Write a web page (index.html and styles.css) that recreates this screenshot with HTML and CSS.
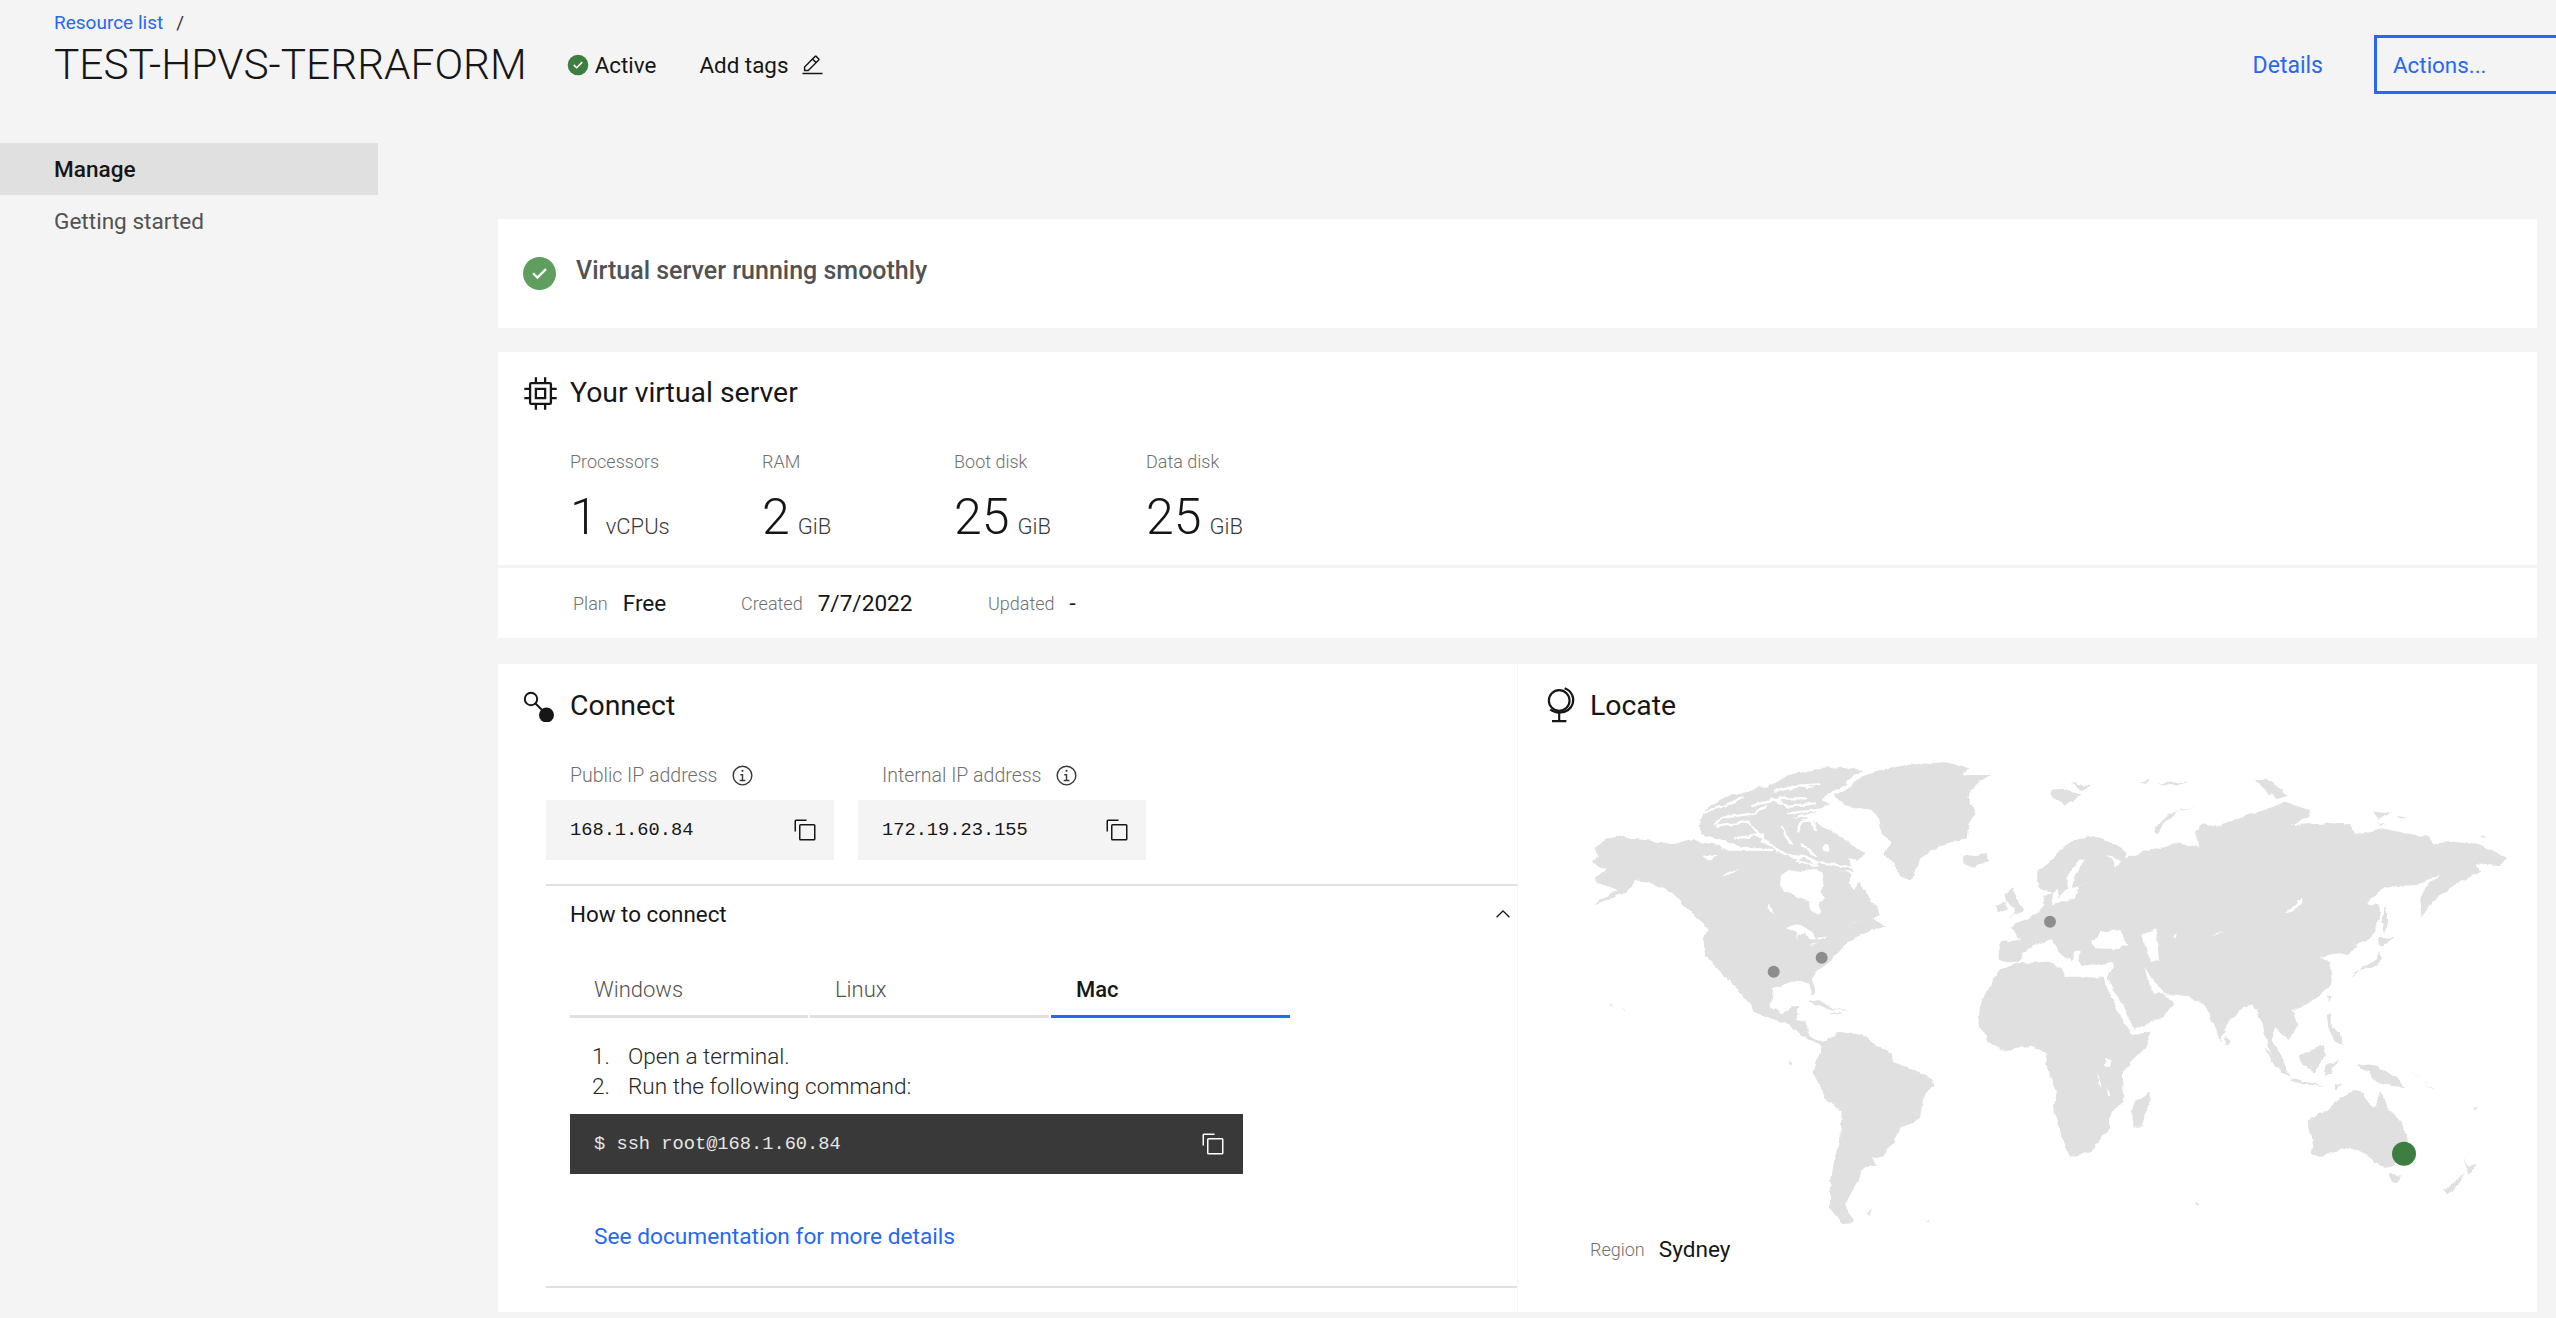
FILE: index.html
```html
<!DOCTYPE html>
<html lang="en">
<head>
<meta charset="utf-8">
<title>TEST-HPVS-TERRAFORM</title>
<link rel="stylesheet" href="styles.css">
</head>
<body>
<header class="page-header">
  <div class="header-left">
    <nav class="crumbs"><a class="link">Resource list</a><span class="crumb-sep">/</span></nav>
    <div class="title-row">
      <h1 class="title">TEST-HPVS-TERRAFORM</h1>
      <span class="status">
        <svg class="status-icon" viewBox="0 0 32 32"><circle cx="16" cy="16" r="15" fill="#3e7e40"/><path d="M14 21.6l-5-5 1.6-1.6 3.4 3.4 7.4-7.4 1.6 1.6z" fill="#fff"/></svg>
        Active
      </span>
      <span class="tags">Add tags
        <svg class="tag-icon" viewBox="0 0 32 32"><path d="M2 26h28v2H2zM25.4 9c.8-.8.8-2 0-2.8l-3.6-3.6c-.8-.8-2-.8-2.8 0l-15 15V24h6.4l15-15zm-5-5L24 7.6l-3 3L17.4 7l3-3zM6 22v-3.6l10-10 3.6 3.6-10 10H6z"/></svg>
      </span>
    </div>
  </div>
  <div class="header-right">
    <a class="link details">Details</a>
    <button class="actions">Actions...</button>
  </div>
</header>
<div class="layout">
  <aside class="sidebar">
    <div class="side-item active">Manage</div>
    <div class="side-item">Getting started</div>
  </aside>
  <main class="content">
    <section class="card health">
      <svg class="health-icon" viewBox="0 0 32 32"><circle cx="16" cy="16" r="16" fill="#5f9e5f"/><path d="M14 21.6l-5-5 1.6-1.6 3.4 3.4 7.4-7.4 1.6 1.6z" fill="#fff"/></svg>
      <span class="health-text">Virtual server running smoothly</span>
    </section>
    <section class="card server">
      <div class="server-top">
        <h2 class="panel-title server-title">
          <svg class="panel-icon chip-icon" viewBox="0 0 32 32"><path d="M11 11v10h10V11H11zm8 8h-6v-6h6v6z"/><path d="M30 13v-2h-4V8a2 2 0 0 0-2-2h-3V2h-2v4h-6V2h-2v4H8a2 2 0 0 0-2 2v3H2v2h4v6H2v2h4v3a2 2 0 0 0 2 2h3v4h2v-4h6v4h2v-4h3a2 2 0 0 0 2-2v-3h4v-2h-4v-6zm-6 11H8V8h16z"/></svg>
          Your virtual server
        </h2>
        <div class="stats">
          <div class="stat"><div class="label">Processors</div><div class="stat-value"><span class="num">1</span><span class="unit">vCPUs</span></div></div>
          <div class="stat"><div class="label">RAM</div><div class="stat-value"><span class="num">2</span><span class="unit">GiB</span></div></div>
          <div class="stat"><div class="label">Boot disk</div><div class="stat-value"><span class="num">25</span><span class="unit">GiB</span></div></div>
          <div class="stat"><div class="label">Data disk</div><div class="stat-value"><span class="num">25</span><span class="unit">GiB</span></div></div>
        </div>
      </div>
      <div class="meta">
        <span class="meta-item plan"><span class="label">Plan</span><span class="meta-value">Free</span></span>
        <span class="meta-item created"><span class="label">Created</span><span class="meta-value">7/7/2022</span></span>
        <span class="meta-item"><span class="label">Updated</span><span class="meta-value">-</span></span>
      </div>
    </section>
    <section class="card split">
      <div class="connect">
        <h2 class="panel-title">
          <svg class="panel-icon connect-icon" viewBox="0 0 32 32"><circle cx="9" cy="9" r="6.2" fill="none" stroke="#161616" stroke-width="2"/><path d="M13 13l10 10" stroke="#161616" stroke-width="2"/><circle cx="24.5" cy="25" r="7.5" fill="#161616"/></svg>
          Connect
        </h2>
        <div class="ips">
          <div class="ip">
            <div class="ip-label"><span class="label">Public IP address</span><svg class="info" viewBox="0 0 32 32"><path d="M17 22v-8h-4v2h2v6h-3v2h8v-2zM16 8a1.5 1.5 0 1 0 0 3 1.5 1.5 0 0 0 0-3z"/><path d="M16 30a14 14 0 1 1 14-14 14 14 0 0 1-14 14zm0-26a12 12 0 1 0 12 12A12 12 0 0 0 16 4z"/></svg></div>
            <div class="ip-box"><span>168.1.60.84</span><svg class="copy" viewBox="0 0 32 32"><path d="M28 10v18H10V10h18m0-2H10a2 2 0 0 0-2 2v18a2 2 0 0 0 2 2h18a2 2 0 0 0 2-2V10a2 2 0 0 0-2-2z"/><path d="M4 18H2V4a2 2 0 0 1 2-2h14v2H4z"/></svg></div>
          </div>
          <div class="ip">
            <div class="ip-label"><span class="label">Internal IP address</span><svg class="info" viewBox="0 0 32 32"><path d="M17 22v-8h-4v2h2v6h-3v2h8v-2zM16 8a1.5 1.5 0 1 0 0 3 1.5 1.5 0 0 0 0-3z"/><path d="M16 30a14 14 0 1 1 14-14 14 14 0 0 1-14 14zm0-26a12 12 0 1 0 12 12A12 12 0 0 0 16 4z"/></svg></div>
            <div class="ip-box"><span>172.19.23.155</span><svg class="copy" viewBox="0 0 32 32"><path d="M28 10v18H10V10h18m0-2H10a2 2 0 0 0-2 2v18a2 2 0 0 0 2 2h18a2 2 0 0 0 2-2V10a2 2 0 0 0-2-2z"/><path d="M4 18H2V4a2 2 0 0 1 2-2h14v2H4z"/></svg></div>
          </div>
        </div>
        <div class="accordion">
          <div class="acc-head"><span>How to connect</span><svg class="chevron" viewBox="0 0 16 16"><path d="M8 5l5 5-.7.7L8 6.4 3.7 10.700 3 10z"/></svg></div>
          <div class="acc-body">
            <div class="tabs">
              <div class="tab">Windows</div>
              <div class="tab">Linux</div>
              <div class="tab selected">Mac</div>
            </div>
            <ol class="steps">
              <li>Open a terminal.</li>
              <li>Run the following command:</li>
            </ol>
            <div class="code"><span>$ ssh root@168.1.60.84</span><svg class="copy light" viewBox="0 0 32 32"><path d="M28 10v18H10V10h18m0-2H10a2 2 0 0 0-2 2v18a2 2 0 0 0 2 2h18a2 2 0 0 0 2-2V10a2 2 0 0 0-2-2z"/><path d="M4 18H2V4a2 2 0 0 1 2-2h14v2H4z"/></svg></div>
            <a class="link doc">See documentation for more details</a>
          </div>
        </div>
      </div>
      <div class="locate">
        <h2 class="panel-title locate-title">
          <svg class="globe" viewBox="0 0 32 40" fill="none" stroke="#161616" stroke-width="2.4"><circle cx="14" cy="15" r="11.500"/><path d="M20 1.500c8 3 11 10 9 17-1.500 5.500-7 10-15 10-4 0-7-1.200-10-3.500"/><path d="M14 28.500V38M6 38h16"/></svg>
          Locate
        </h2>
        <svg class="map" viewBox="0 0 2820 1425" fill="#e0e0e0">
          <defs>
            <filter id="rough" x="0" y="0" width="100%" height="100%">
              <feTurbulence type="fractalNoise" baseFrequency="0.035" numOctaves="3" seed="4" result="n"/>
              <feDisplacementMap in="SourceGraphic" in2="n" scale="16" xChannelSelector="R" yChannelSelector="G"/>
            </filter>
          </defs>
          <g filter="url(#rough)">
          <!-- north + central america -->
          <path d="M20 318L45 306L28 278L60 256L105 241L150 252L205 258L265 272L285 262L325 252L350 265L395 272L430 287L480 288L540 286L575 292L610 300L640 318L655 305L690 330L720 325L760 345L800 358L790 385L805 403L820 382L850 425L870 450L885 480L865 490L905 518L860 522L840 535L800 552L770 578L735 620L695 650L680 672L692 712L682 722L668 682L620 680L565 700L560 735L558 760L565 760L590 778L622 755L640 752L630 795L665 800L668 835L695 855L715 860L730 875L690 862L650 840L610 805L570 795L505 770L498 750L470 720L415 660L360 600L355 550L368 520L330 485L295 450L270 420L240 400L180 380L150 375L125 410L60 440L25 447L100 405L40 385L28 370L65 345z"/>
          <!-- arctic archipelago as one mass, cut by channels below -->
          <path d="M345 195L365 160L420 130L505 105L570 85L610 60L680 45L770 35L840 45L800 65L780 90L730 115L710 135L735 150L690 172L620 188L660 190L700 205L760 240L838 295L820 315L790 310L805 350L770 348L710 325L660 300L600 295L500 285L440 270L400 250L345 238z"/>
          <g class="channels">
            <path d="M345 175L420 150L470 130M390 205L415 188L510 175L540 155M395 215L490 200L520 235L552 268M505 150L600 130L660 130M570 110L640 92L700 88M640 92L680 100M610 175L700 165M640 225L650 200L680 195L690 225M590 215L620 270M530 255L600 298M400 255L470 282L560 285M650 265L690 300M635 320L700 335M710 322L800 338M560 130L610 155L690 145M450 250L530 240"/>
          </g>
          <circle class="sea" cx="724" cy="278" r="11"/>
          <path d="M750 120L790 100L840 60L900 45L960 30L1080 22L1150 40L1130 60L1222 60L1170 90L1150 130L1172 165L1150 210L1145 250L1060 275L1000 320L980 378L950 365L920 325L900 290L920 260L890 240L885 200L860 165L800 155L760 135zM1130 305L1170 300L1205 298L1212 315L1170 338L1140 325zM1258 420L1285 395L1295 430L1318 465L1270 487L1295 465L1268 445zM1232 452L1260 435L1265 465L1235 473z"/>
          <!-- eurasia -->
          <path d="M1245 615L1240 570L1250 558L1308 552L1275 518L1310 500L1360 470L1378 450L1375 422L1400 418L1365 398L1352 375L1362 345L1405 310L1440 272L1510 240L1550 250L1625 290L1620 310L1650 300L1690 285L1770 265L1840 275L1830 230L1855 205L1890 215L1925 205L1980 180L2040 165L2100 140L2175 165L2170 185L2120 210L2250 205L2295 210L2310 240L2390 220L2460 235L2530 245L2545 265L2610 260L2680 270L2770 310L2740 330L2675 325L2685 350L2620 383L2560 420L2510 485L2502 430L2530 390L2570 355L2495 390L2400 395L2345 445L2380 450L2385 490L2355 550L2320 565L2290 600L2260 595L2205 605L2235 625L2240 680L2235 695L2180 740L2120 765L2140 810L2110 855L2070 820L2060 855L2100 925L2115 970L2060 910L2030 800L2005 745L1980 755L1928 805L1905 860L1870 770L1860 755L1820 725L1740 715L1700 670L1678 635L1690 680L1705 715L1735 715L1765 745L1735 785L1645 825L1642 815L1612 750L1575 690L1565 670L1585 622L1490 636L1480 610L1485 590L1465 590L1460 620L1445 600L1412 540L1440 575L1462 598L1445 612L1420 590L1400 555L1375 565L1345 570L1315 595L1300 620L1265 622z"/>
          <path d="M1392 110L1420 100L1490 120L1440 150L1415 130zM1455 85L1520 90L1490 105zM1660 80L1700 75L1690 85zM1720 85L1810 80L1770 92zM1845 155L1780 165L1740 200L1720 240L1705 230L1750 175zM2010 75L2045 70L2110 120L2070 130L2030 95zM2365 170L2415 175L2380 190zM2435 180L2470 185L2440 188zM2380 200L2405 208L2385 208zM2685 240L2710 238L2695 246zM2400 450L2410 500L2400 540L2390 490zM2385 545L2425 550L2395 570L2380 570zM2385 585L2390 615L2365 640L2310 650L2300 665L2345 630L2375 610z"/>
          <!-- africa -->
          <path d="M1190 735L1240 650L1290 625L1390 620L1430 640L1440 665L1470 665L1555 668L1565 695L1595 765L1630 820L1640 840L1700 830L1680 880L1610 950L1615 1040L1575 1075L1575 1120L1555 1140L1520 1190L1455 1205L1445 1185L1405 1070L1415 1010L1385 930L1380 900L1388 895L1340 875L1250 887L1210 860L1180 810L1185 755z"/>
          <path d="M1690 1010L1698 1035L1680 1075L1670 1115L1645 1115L1642 1075L1650 1040zM1925 840L1940 860L1925 872L1920 855z"/>
          <!-- south america -->
          <path d="M715 860L760 830L830 840L880 875L920 895L925 925L985 945L1040 970L1045 990L1015 1025L1005 1090L985 1105L950 1115L925 1160L890 1205L860 1205L875 1230L830 1245L825 1265L800 1310L780 1350L805 1402L770 1405L735 1360L735 1300L745 1230L765 1160L770 1070L725 1035L685 955L695 915z"/>
          <path d="M670 740L700 735L745 760L800 770L740 763L680 745zM730 775L780 775L740 781zM840 1370L865 1362L850 1380zM1020 1395L1038 1402L1030 1402zM612 915L618 925L612 930zM75 745L90 748L80 750zM112 758L120 768L112 765z"/>
          <!-- asia-pacific islands -->
          <path d="M2038 880L2080 920L2120 965L2095 955L2050 905zM2115 970L2170 985L2220 995L2170 992L2130 985zM2140 905L2180 885L2210 870L2220 905L2185 950L2155 930zM2225 925L2265 915L2240 935L2240 960L2220 960zM2225 780L2240 775L2240 810L2265 840L2275 870L2250 860L2230 815zM2230 720L2240 720L2232 740zM2315 928L2380 935L2440 970L2460 1000L2410 990L2370 980L2355 955zM2250 990L2275 985L2250 1005zM2480 950L2540 1000L2550 1005L2490 960z"/>
          <path d="M2168 1095L2230 1065L2265 1030L2310 1008L2340 1015L2340 1035L2370 1058L2385 1005L2410 1060L2450 1100L2468 1160L2460 1210L2420 1235L2400 1240L2365 1220L2345 1200L2325 1190L2300 1175L2250 1190L2200 1205L2180 1195L2185 1170L2170 1120z"/>
          <path d="M2415 1258L2445 1258L2435 1285L2420 1280zM2635 1205L2650 1235L2675 1230L2650 1260L2645 1240zM2635 1255L2620 1290L2590 1318L2580 1302L2615 1275zM1832 1345L1850 1348L1840 1352zM2665 1060L2685 1055L2670 1066z"/>
          <!-- lakes and inland seas -->
          <g class="water">
            <path d="M585 370L610 345L640 350L680 340L710 355L715 385L710 410L720 430L700 445L705 470L695 480L680 465L675 440L640 425L600 410L582 390zM548 445L556 445L566 480L555 470zM355 302L400 298L370 318zM410 362L462 342L432 362zM605 520L640 505L680 530L692 550L670 555L660 535L640 540L640 565L635 530zM695 548L725 545L700 555zM670 570L705 562L680 572zM770 522L860 485L810 505zM430 665L450 690L470 735L450 720zM1520 565L1550 530L1605 525L1630 570L1600 582L1530 580zM1675 535L1710 520L1720 570L1725 610L1700 618L1685 590L1672 540zM1763 543L1775 535L1772 552zM1885 540L1925 530L1890 535L1885 548zM2100 475L2125 455L2150 425L2148 445L2125 470zM1480 315L1505 310L1470 360L1460 400L1535 380L1480 395L1470 430L1430 440L1405 448L1402 418L1420 400L1418 430L1445 400L1445 365zM1560 295L1610 320L1590 335L1580 312zM1558 935L1565 912L1580 912L1575 935zM1537 948L1550 1000L1540 985zM1565 995L1575 1030L1565 1020z"/>
          </g>
          </g>
          <circle class="dot" cx="566" cy="650" r="18"/>
          <circle class="dot" cx="710" cy="608" r="18"/>
          <circle class="dot" cx="1395" cy="500" r="18"/>
          <circle class="dot-on" cx="2457" cy="1196" r="36"/>
        </svg>
        <div class="region"><span class="label">Region</span><span class="region-value">Sydney</span></div>
      </div>
    </section>
  </main>
</div>
</body>
</html>
```

FILE: styles.css
```css
* { box-sizing: border-box; }
html, body { margin: 0; height: 1318px; overflow: hidden; }
body {
  background: #f4f4f4;
  color: #161616;
  font-family: Roboto, "Open Sans", "Liberation Sans", sans-serif;
  font-weight: 400;
}
h1, h2 { margin: 0; font-weight: 400; }
svg { display: block; flex: none; }
.link { color: #2867f0; }

.page-header { height: 143px; display: flex; justify-content: space-between; }
.header-left { padding: 12px 0 0 54px; }
.crumbs { display: flex; font-size: 19px; line-height: 22px; height: 22px; }
.crumb-sep { margin-left: 13px; color: #393939; }
.title-row { display: flex; align-items: center; margin-top: 9px; height: 44px; }
.title { font-size: 42.400px; font-weight: 300; line-height: 44px; }
.status { display: flex; align-items: center; gap: 6px; font-size: 22.400px; margin-left: 40px; }
.status-icon { width: 22px; height: 22px; }
.tags { display: flex; align-items: center; font-size: 22.400px; margin-left: 43px; gap: 13px; }
.tag-icon { width: 23px; height: 23px; fill: #161616; }
.header-right { display: flex; align-items: flex-start; padding-top: 35px; }
.details { font-size: 23px; line-height: 61px; margin-right: 51px; }
.actions {
  width: 182px; height: 59px; padding: 0 0 0 16px;
  border: 3px solid #2867f0; border-right: 0; background: none;
  color: #2867f0; font: inherit; font-size: 22.400px; text-align: left;
}

.layout { display: flex; }
.sidebar { width: 378px; flex: none; }
.side-item { height: 52px; padding-left: 54px; font-size: 22.600px; line-height: 54px; color: #525252; }
.side-item.active { background: #e0e0e0; color: #161616; font-weight: 500; }
.content { width: 2039px; margin-left: 120px; padding-top: 76px; display: flex; flex-direction: column; gap: 24px; }
.card { background: #fff; }
.health { height: 109px; padding-left: 25px; display: flex; align-items: center; gap: 20px; font-size: 25px; font-weight: 500; color: #525252; }
.health-icon { width: 33px; height: 33px; }
.health-text { margin-top: -6px; }

.server { height: 286px; }
.server-top { height: 216px; border-bottom: 3px solid #f4f4f4; padding: 22px 0 0 24px; }
.panel-title { display: flex; align-items: center; gap: 14px; font-size: 28.400px; line-height: 38px; height: 38px; }
.panel-icon { width: 32px; height: 32px; fill: #161616; }
.server-title { gap: 11px; }
.chip-icon { width: 37px; height: 37px; }
.label { color: #6f6f6f; font-size: 18px; font-weight: 300; }
.stats { display: grid; grid-template-columns: repeat(4, 192px); margin: 39px 0 0 48px; }
.stat-value { display: flex; align-items: baseline; gap: 8px; margin-top: 14px; height: 62px; }
.num { font-size: 50px; font-weight: 300; line-height: 62px; }
.unit { font-size: 22px; font-weight: 300; color: #393939; }
.meta { height: 70px; padding-left: 75px; display: flex; align-items: center; }
.meta-item { display: flex; align-items: center; gap: 15px; }
.meta-value { font-size: 22.600px; font-weight: 400; }
.plan { width: 168px; }
.created { width: 247px; }

.split { height: 648px; display: flex; margin-top: 2px; }
.connect { width: 1019px; flex: none; padding-top: 23px; }
.connect .panel-title { padding-left: 24px; gap: 16px; }
.ips { display: flex; gap: 24px; margin: 38px 0 0 48px; }
.ip { width: 288px; }
.ip-label { display: flex; align-items: center; gap: 14px; padding-left: 24px; height: 24px; }
.ip-label .label { font-size: 19.500px; }
.info { width: 23px; height: 23px; fill: #393939; }
.ip-box { margin-top: 13px; height: 60px; background: #f4f4f4; padding: 0 17px 0 24px; display: flex; align-items: center; justify-content: space-between; font-family: "Liberation Mono", "DejaVu Sans Mono", monospace; font-size: 18.700px; }
.copy { width: 24px; height: 24px; fill: #161616; }
.copy.light { fill: #fff; }
.accordion { margin: 24px 0 0 48px; border-top: 2px solid #e0e0e0; border-bottom: 2px solid #e0e0e0; height: 404px; }
.acc-head { height: 56px; padding: 0 3px 0 24px; display: flex; align-items: center; justify-content: space-between; font-size: 22.400px; }
.chevron { width: 22px; height: 22px; fill: #161616; }
.acc-body { padding-left: 24px; }
.tabs { display: flex; gap: 2px; margin-top: 32px; width: 720px; }
.tab { flex: 1; height: 44px; padding-left: 25px; border-bottom: 3px solid #e0e0e0; font-size: 22px; font-weight: 300; color: #525252; line-height: 32px; }
.tab:first-child { padding-left: 24px; }
.tab.selected { color: #161616; font-weight: 500; border-color: #2867f0; }
.steps { margin: 24px 0 0; padding-left: 22px; list-style: none; counter-reset: step; font-size: 22.600px; font-weight: 300; line-height: 30px; color: #262626; }
.steps li { display: flex; counter-increment: step; }
.steps li::before { content: counter(step) "."; width: 36px; }
.code { margin-top: 12px; width: 673px; height: 60px; background: #393939; color: #e6e6e6; padding: 0 18px 0 24px; display: flex; align-items: center; justify-content: space-between; font-family: "Liberation Mono", "DejaVu Sans Mono", monospace; font-size: 18.700px; }
.doc { display: block; margin: 50px 0 0 24px; font-size: 22.700px; line-height: 26px; }

.locate { flex: 1; border-left: 1px solid #f4f4f4; padding-top: 23px; }
.locate-title { padding-left: 28px; gap: 14px; }
.globe { width: 30px; height: 36px; margin-top: -2px; }
.map { width: 940px; height: 475px; margin: 30px 0 0 67px; }
.channels path { fill: none; stroke: #fff; stroke-width: 7; stroke-linecap: round; stroke-linejoin: round; }
.sea { fill: #fff; }
.water path { fill: #fff; }
.dot { fill: #8d8d8d; }
.dot-on { fill: #3e7e40; }
.region { display: flex; align-items: center; gap: 14px; margin: 4px 0 0 72px; height: 30px; }
.region-value { font-size: 22.600px; }
```
